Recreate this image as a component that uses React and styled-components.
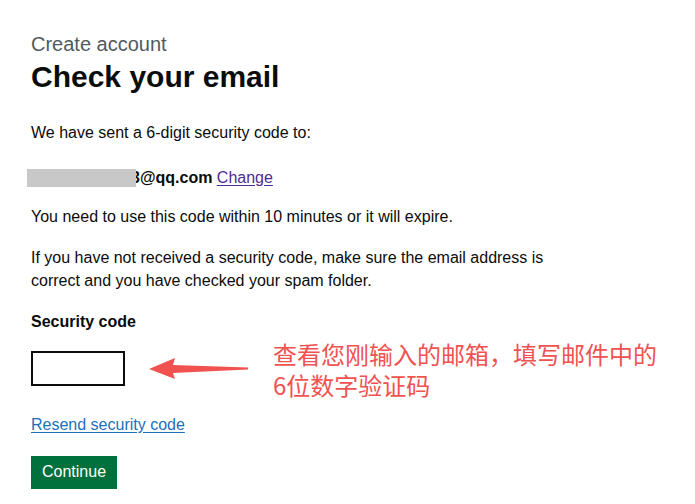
import React from 'react'
import styled, { createGlobalStyle } from 'styled-components'

const GlobalStyle = createGlobalStyle`
  html, body {
    margin: 0;
    padding: 0;
    background: #fff;
  }
  body {
    font-family: 'Liberation Sans', Arial, sans-serif;
    color: #0b0c0c;
    -webkit-font-smoothing: antialiased;
  }
`

function Arrow() {
  return (
    <ArrowSvg width="104" height="24" viewBox="0 0 104 24">
      <polygon
        points="3,12 29,1 27,8 102,10.5 102,12.5 27,16 29,22"
        fill="#f0524f"
      />
    </ArrowSvg>
  )
}

function App() {
  return (
    <>
      <GlobalStyle />
      <Page>
        <Caption>Create account</Caption>
        <Heading>Check your email</Heading>
        <Body $mt={27}>We have sent a 6-digit security code to:</Body>
        <Body $mt={22}>
          <Redact />
          <Email>3@qq.com</Email> <Link $visited>Change</Link>
        </Body>
        <Body $mt={16}>
          You need to use this code within 10 minutes or it will expire.
        </Body>
        <Body $mt={18}>
          If you have not received a security code, make sure the email address
          is
          <br />
          correct and you have checked your spam folder.
        </Body>
        <Label>Security code</Label>
        <InputRow>
          <CodeInput type="text" />
          <Arrow />
          <Note>
            查看您刚输入的邮箱，填写邮件中的
            <br />
            6位数字验证码
          </Note>
        </InputRow>
        <Body $mt={27}>
          <Link>Resend security code</Link>
        </Body>
        <Button>Continue</Button>
      </Page>
    </>
  )
}

const Page = styled.div`
  padding: 32px 0 0 31px;
`

const Caption = styled.div`
  font-size: 20px;
  line-height: 25px;
  color: #505a5f;
`

const Heading = styled.h1`
  margin: 3px 0 0;
  font-size: 30px;
  line-height: 34px;
  font-weight: 700;
`

const Body = styled.p`
  margin: ${(p) => p.$mt}px 0 0;
  font-size: 16px;
  line-height: 23px;
`

const Redact = styled.span`
  display: inline-block;
  position: relative;
  z-index: 1;
  width: 109px;
  height: 18px;
  margin: 0 -5px 0 -4px;
  vertical-align: -4px;
  background: #c8c8c8;
`

const Email = styled.b`
  font-weight: 700;
`

const Link = styled.a`
  color: ${(p) => (p.$visited ? '#4c2c92' : '#1d70b8')};
  text-decoration: underline;
  text-underline-offset: 2px;
  cursor: pointer;
`

const Label = styled.div`
  margin-top: 18px;
  font-size: 16px;
  line-height: 23px;
  font-weight: 700;
`

const InputRow = styled.div`
  display: flex;
  align-items: center;
  height: 35px;
  margin-top: 18px;
`

const CodeInput = styled.input`
  box-sizing: border-box;
  width: 94px;
  height: 35px;
  margin: 0;
  padding: 4px;
  border: 2px solid #0b0c0c;
  border-radius: 0;
  font: inherit;
  flex: none;
`

const ArrowSvg = styled.svg`
  display: block;
  flex: none;
  margin-left: 21px;
`

const Note = styled.div`
  margin-left: 23px;
  font-family: 'Noto Sans CJK SC', sans-serif;
  font-size: 24px;
  line-height: 31px;
  color: #f0524f;
  white-space: nowrap;
`

const Button = styled.button`
  display: block;
  box-sizing: border-box;
  height: 33px;
  margin-top: 20px;
  padding: 0 11px 2px;
  border: 0;
  border-radius: 0;
  background: #00703c;
  box-shadow: 0 2px 0 #002d18;
  color: #fff;
  font-family: inherit;
  font-size: 16px;
  line-height: 31px;
  cursor: pointer;
`

export default App
